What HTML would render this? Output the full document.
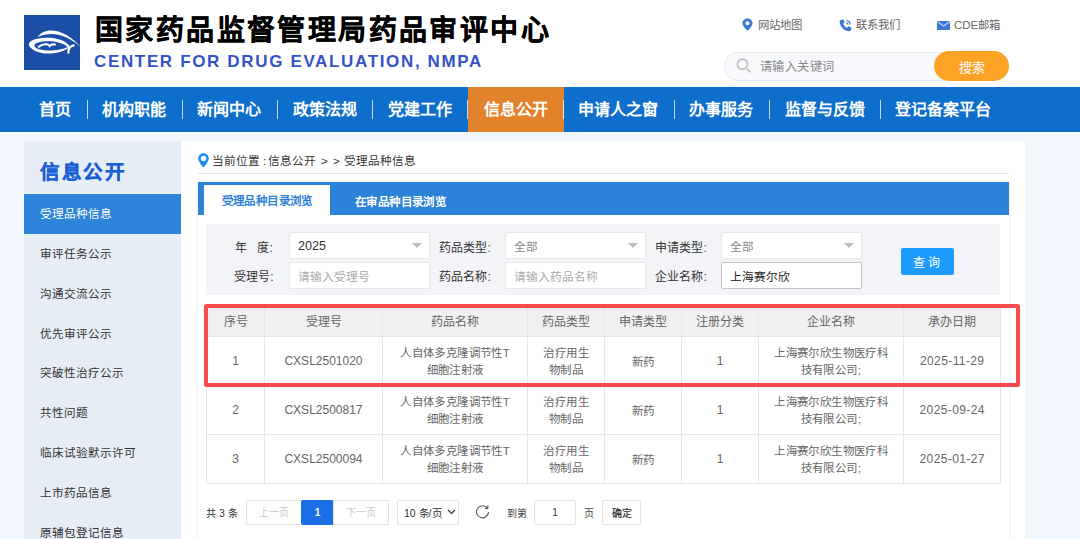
<!DOCTYPE html>
<html lang="zh-CN">
<head>
<meta charset="utf-8">
<style>
*{margin:0;padding:0;box-sizing:border-box}
html,body{width:1080px;height:539px;overflow:hidden}
body{position:relative;background:#f2f6fd;font-family:"Liberation Sans",sans-serif;color:#333}
.a{position:absolute;white-space:nowrap}
#hdr{left:0;top:0;width:1080px;height:87px;background:#fff}
#logo{left:24px;top:15px;width:64px;height:55px}
#t1{left:95px;top:10.5px;font-size:28px;line-height:40px;font-weight:bold;color:#000;letter-spacing:2.4px;-webkit-text-stroke:0.35px #000}
#t2{left:94px;top:52px;font-size:17px;line-height:20px;font-weight:bold;color:#3553c9;letter-spacing:1.65px}
.tl{font-size:11.4px;line-height:16px;color:#666;top:17px}
#sbox{left:724px;top:52px;width:280px;height:29px;border:1px solid #e6e8ec;border-radius:14.5px;background:#f8f9fc}
#sph{left:760px;top:58px;font-size:12.2px;line-height:18px;color:#888;letter-spacing:0.4px}
#sbtn{left:934px;top:51px;width:75px;height:30px;border-radius:15px;background:#fca325;color:#fff;font-size:13px;line-height:33px;text-align:center}
#nav{left:0;top:87px;width:1080px;height:45px;background:#0e6ecb}
.ni{top:87px;height:45px;line-height:46px;font-size:16px;font-weight:bold;color:#fff}
.ns{top:100px;width:1px;height:19px;background:rgba(255,255,255,.75)}
#side{left:24px;top:141px;width:157px;height:400px;background:#e7edf6}
#stitle{left:40px;top:159px;font-size:19.5px;line-height:26px;font-weight:bold;color:#1a5fd6;letter-spacing:1.7px;-webkit-text-stroke:0.3px #1a5fd6}
.si{left:24px;width:157px;height:40px;line-height:42px;padding-left:16px;font-size:11.6px;color:#333;line-height:40px}
.si.on{background:#2d84d8;color:#fff}
#panel{left:181px;top:141px;width:844px;height:400px;background:#fff}
.bc{top:152px;font-size:11.6px;line-height:18px;color:#333}
#bcl{left:198px;top:173px;width:811px;height:1px;background:#e2e2e2}
#box{left:198px;top:182px;width:811px;height:380px;background:#fff;box-shadow:0 0 3px 0 rgba(40,70,130,.16)}
#tabbar{left:198px;top:182px;width:811px;height:33px;background:#2b82d6}
#tab1{left:204px;top:185px;width:126px;height:30px;background:#fff;color:#2f7fd8;font-weight:bold;font-size:11.5px;line-height:33px;letter-spacing:0.4px;text-indent:0.4px;text-align:center}
#tab2{left:355px;top:191px;font-size:11.5px;letter-spacing:0.4px;line-height:22px;color:#fff;font-weight:bold}
#filter{left:206px;top:224px;width:794px;height:71px;background:#f3f4f8}
.lb{font-size:12px;line-height:18px;color:#333;letter-spacing:0.1px}
.inp{width:141px;height:27px;background:#fff;border:1px solid #e8e8e8;border-radius:2px;font-size:11.7px;line-height:27px;padding-left:8px;color:#aaa}
.tri{width:0;height:0;border-left:5px solid transparent;border-right:5px solid transparent;border-top:5px solid #bdbdbd}
#qbtn{left:901px;top:248px;width:53px;height:27px;background:#1e9bff;border-radius:2px;color:#fff;font-size:12px;line-height:31px;text-align:center;padding-right:2px}
table{position:absolute;left:206px;top:307px;border-collapse:collapse;font-size:12px;color:#666;table-layout:fixed}
td,th{border:1px solid #e6e6e6;text-align:center;font-weight:normal;line-height:18px;padding:0}
th{background:#f0f0f0;height:29px;color:#666}
td{height:49px;font-size:11.5px;line-height:17px;padding-top:2px;letter-spacing:0.4px;text-indent:0.4px}
td.n{font-size:12px;padding-top:1px;letter-spacing:0;text-indent:0}
td.d{font-size:12px;padding-top:1px;letter-spacing:0.4px}
#red{left:204px;top:304px;width:816px;height:83px;border:4px solid #fa4a4e;border-radius:2.5px}
.pg{font-size:10px;line-height:24px;height:25px;border:1px solid #e3e3e3;background:#fff;text-align:center;top:500px}
</style>
</head>
<body>
<div id="hdr" class="a"></div>
<svg id="logo" class="a" viewBox="0 0 64 55" width="64" height="55">
  <defs>
    <linearGradient id="g1" x1="0" y1="0" x2="1" y2="0">
      <stop offset="0" stop-color="#fff"/>
      <stop offset="0.78" stop-color="#fff"/>
      <stop offset="1" stop-color="#fff" stop-opacity="0.15"/>
    </linearGradient>
  </defs>
  <rect width="56" height="55" fill="#1b4fa6"/>
  <path d="M13.5,22 C20,13 38,10 60,35 C44,19 28,15.5 13.5,22 Z" fill="url(#g1)"/>
  <path d="M46,31.5 C40,24 30,22.6 22,22.8 C12,23 4.5,26 4.9,29.5 C5.3,34 14,38.6 24,38.6 C34,38.6 42,35.5 46,31.5 Z M43.5,31.8 C40,34.5 33,35.5 25,35.5 C16,35.5 10.4,33 10.4,30.5 C10.4,28 16,26.2 24,26.2 C32,26.2 39,28 43.5,31.8 Z" fill="#fff" fill-rule="evenodd"/>
  <path d="M50.5,30.2 Q43.5,31.5 44.5,38.5" stroke="#fff" stroke-width="2.2" fill="none"/>
  <path d="M14.8,31.8 Q18.5,28.6 23.5,29.4 Q25,30 25.6,31 Q27.5,28.8 31,29.6" stroke="#fff" stroke-width="2.1" fill="none" stroke-linecap="round"/>
</svg>
<div id="t1" class="a">国家药品监督管理局药品审评中心</div>
<div id="t2" class="a">CENTER FOR DRUG EVALUATION, NMPA</div>

<!-- top links -->
<svg class="a" style="left:742px;top:18px" width="11" height="13" viewBox="0 0 11 13"><path d="M5.5,0.5 C2.5,0.5 0.5,2.7 0.5,5.3 C0.5,8.3 5.5,12.8 5.5,12.8 C5.5,12.8 10.5,8.3 10.5,5.3 C10.5,2.7 8.5,0.5 5.5,0.5 Z M5.5,3.3 A2,2 0 1 1 5.49,3.3 Z" fill="#3a78d4" fill-rule="evenodd"/></svg>
<div class="a tl" style="left:758px">网站地图</div>
<svg class="a" style="left:839px;top:18.5px" width="14" height="13" viewBox="0 0 13 12"><path d="M2.2,0.6 L4.2,0.4 L5.2,3.3 L3.8,4.4 C4.5,6.2 5.8,7.5 7.6,8.2 L8.7,6.8 L11.6,7.8 L11.4,9.8 C11.2,10.9 10.2,11.5 9.2,11.4 C4.5,10.8 1.2,7.5 0.6,2.8 C0.5,1.7 1.1,0.8 2.2,0.6 Z" fill="#3a78d4"/><path d="M7,1.5 A4,4 0 0 1 10.5,5 M7,3.5 A2,2 0 0 1 8.5,5" stroke="#3a78d4" stroke-width="1.1" fill="none"/></svg>
<div class="a tl" style="left:856px">联系我们</div>
<svg class="a" style="left:937px;top:21px" width="13" height="9" viewBox="0 0 13 9"><path d="M0,0 H13 V9 H0 Z" fill="#3a78d4"/><path d="M0,0.5 L6.5,5 L13,0.5" stroke="#b5d0f2" stroke-width="1.3" fill="none"/></svg>
<div class="a tl" style="left:954px">CDE邮箱</div>

<div id="sbox" class="a"></div>
<svg class="a" style="left:736px;top:58px" width="16" height="16" viewBox="0 0 16 16"><circle cx="6.5" cy="6.2" r="5" stroke="#c2c2c2" stroke-width="1.9" fill="none"/><path d="M11.2,11 L14.4,14.2" stroke="#c2c2c2" stroke-width="2"/></svg>
<div id="sph" class="a">请输入关键词</div>
<div id="sbtn" class="a">搜索</div>

<!-- nav -->
<div id="nav" class="a"></div>
<div class="a" style="left:468px;top:87px;width:96px;height:45px;background:#e2832b"></div>
<div class="a ni" style="left:39px">首页</div>
<div class="a ns" style="left:87px"></div>
<div class="a ni" style="left:102px">机构职能</div>
<div class="a ns" style="left:182px"></div>
<div class="a ni" style="left:197px">新闻中心</div>
<div class="a ns" style="left:277px"></div>
<div class="a ni" style="left:293px">政策法规</div>
<div class="a ns" style="left:372px"></div>
<div class="a ni" style="left:388px">党建工作</div>
<div class="a ns" style="left:467px"></div>
<div class="a ni" style="left:484px">信息公开</div>
<div class="a ns" style="left:563px"></div>
<div class="a ni" style="left:578px">申请人之窗</div>
<div class="a ns" style="left:674px"></div>
<div class="a ni" style="left:689px">办事服务</div>
<div class="a ns" style="left:769px"></div>
<div class="a ni" style="left:785px">监督与反馈</div>
<div class="a ns" style="left:880px"></div>
<div class="a ni" style="left:895px">登记备案平台</div>

<!-- sidebar -->
<div id="side" class="a"></div>
<div id="stitle" class="a">信息公开</div>
<div class="a si on" style="top:194px">受理品种信息</div>
<div class="a si" style="top:234px">审评任务公示</div>
<div class="a si" style="top:274px">沟通交流公示</div>
<div class="a si" style="top:314px">优先审评公示</div>
<div class="a si" style="top:353px">突破性治疗公示</div>
<div class="a si" style="top:393px">共性问题</div>
<div class="a si" style="top:433px">临床试验默示许可</div>
<div class="a si" style="top:473px">上市药品信息</div>
<div class="a si" style="top:513px">原辅包登记信息</div>

<!-- panel -->
<div id="panel" class="a"></div>
<svg class="a" style="left:198px;top:153px" width="11" height="15" viewBox="0 0 11 15"><path d="M5.5,0.3 C2.5,0.3 0.2,2.6 0.2,5.5 C0.2,8.8 5.5,14.6 5.5,14.6 C5.5,14.6 10.8,8.8 10.8,5.5 C10.8,2.6 8.5,0.3 5.5,0.3 Z M5.5,2.7 A2.8,2.8 0 1 1 5.49,2.7 Z" fill="#1a8cf0" fill-rule="evenodd"/></svg>
<div class="a bc" style="left:212px">当前位置</div><div class="a bc" style="left:263px">:</div><div class="a bc" style="left:268px">信息公开</div><div class="a bc" style="left:321px">&gt;</div><div class="a bc" style="left:333px">&gt;</div><div class="a bc" style="left:344px">受理品种信息</div>
<div id="bcl" class="a"></div>
<div id="box" class="a"></div>
<div id="tabbar" class="a"></div>
<div id="tab1" class="a">受理品种目录浏览</div>
<div id="tab2" class="a">在审品种目录浏览</div>

<div id="filter" class="a"></div>
<div class="a lb" style="left:235px;top:239px">年&nbsp;&nbsp;&nbsp;度:</div>
<div class="a inp" style="left:289px;top:232px;color:#333;font-size:12.6px;line-height:26px">2025</div>
<div class="a tri" style="left:412px;top:243px"></div>
<div class="a lb" style="left:234px;top:268px">受理号:</div>
<div class="a inp" style="left:289px;top:262px">请输入受理号</div>

<div class="a lb" style="left:439px;top:239px">药品类型:</div>
<div class="a inp" style="left:505px;top:232px;color:#888">全部</div>
<div class="a tri" style="left:628px;top:243px"></div>
<div class="a lb" style="left:439px;top:268px">药品名称:</div>
<div class="a inp" style="left:505px;top:262px">请输入药品名称</div>

<div class="a lb" style="left:655px;top:239px">申请类型:</div>
<div class="a inp" style="left:721px;top:232px;color:#888">全部</div>
<div class="a tri" style="left:844px;top:243px"></div>
<div class="a lb" style="left:655px;top:268px">企业名称:</div>
<div class="a inp" style="left:721px;top:262px;color:#222;border-color:#c4c4c4">上海赛尔欣</div>
<div id="qbtn" class="a">查 询</div>

<table>
<colgroup><col style="width:58px"><col style="width:118px"><col style="width:145px"><col style="width:77px"><col style="width:77px"><col style="width:77px"><col style="width:145px"><col style="width:97px"></colgroup>
<tr><th>序号</th><th>受理号</th><th>药品名称</th><th>药品类型</th><th>申请类型</th><th>注册分类</th><th>企业名称</th><th>承办日期</th></tr>
<tr><td class="n">1</td><td class="n">CXSL2501020</td><td>人自体多克隆调节性T<br>细胞注射液</td><td>治疗用生<br>物制品</td><td>新药</td><td class="n">1</td><td>上海赛尔欣生物医疗科<br>技有限公司;</td><td class="d">2025-11-29</td></tr>
<tr><td class="n">2</td><td class="n">CXSL2500817</td><td>人自体多克隆调节性T<br>细胞注射液</td><td>治疗用生<br>物制品</td><td>新药</td><td class="n">1</td><td>上海赛尔欣生物医疗科<br>技有限公司;</td><td class="d">2025-09-24</td></tr>
<tr><td class="n">3</td><td class="n">CXSL2500094</td><td>人自体多克隆调节性T<br>细胞注射液</td><td>治疗用生<br>物制品</td><td>新药</td><td class="n">1</td><td>上海赛尔欣生物医疗科<br>技有限公司;</td><td class="d">2025-01-27</td></tr>
</table>
<div id="red" class="a"></div>

<!-- pagination -->
<div class="a" style="left:206px;top:505px;font-size:10px;line-height:18px;color:#333;letter-spacing:0.2px">共 3 条</div>
<div class="a pg" style="left:246px;width:56px;color:#c8c8c8">上一页</div>
<div class="a pg" style="left:301px;width:33px;background:#1a6ee6;border-color:#1a6ee6;color:#fff;font-weight:bold;border-radius:2px">1</div>
<div class="a pg" style="left:333px;width:56px;color:#c8c8c8">下一页</div>
<div class="a pg" style="left:397px;width:62px;color:#333;text-align:left;padding-left:6px;border-radius:2px;font-size:10.5px;line-height:25px">10 条/页</div>
<svg class="a" style="left:447px;top:509px" width="9" height="6" viewBox="0 0 9 6"><path d="M1,1 L4.5,4.5 L8,1" stroke="#333" stroke-width="1.1" fill="none"/></svg>
<svg class="a" style="left:475px;top:504px" width="15" height="15" viewBox="0 0 15 15"><path d="M12.3,4.2 A6,6 0 1 0 13.5,8" stroke="#555" stroke-width="1.1" fill="none"/><path d="M9.8,4.4 L12.8,4.4 L12.8,1.2" stroke="#555" stroke-width="1.1" fill="none"/></svg>
<div class="a" style="left:507px;top:505px;font-size:10px;line-height:18px;color:#444">到第</div>
<div class="a pg" style="left:534px;width:42px;color:#333;border-radius:2px">1</div>
<div class="a" style="left:584px;top:505px;font-size:10px;line-height:18px;color:#444">页</div>
<div class="a pg" style="left:602px;width:39px;color:#222;font-weight:normal;border-radius:2px;line-height:25px;-webkit-text-stroke:0.15px #222">确定</div>
</body>
</html>
